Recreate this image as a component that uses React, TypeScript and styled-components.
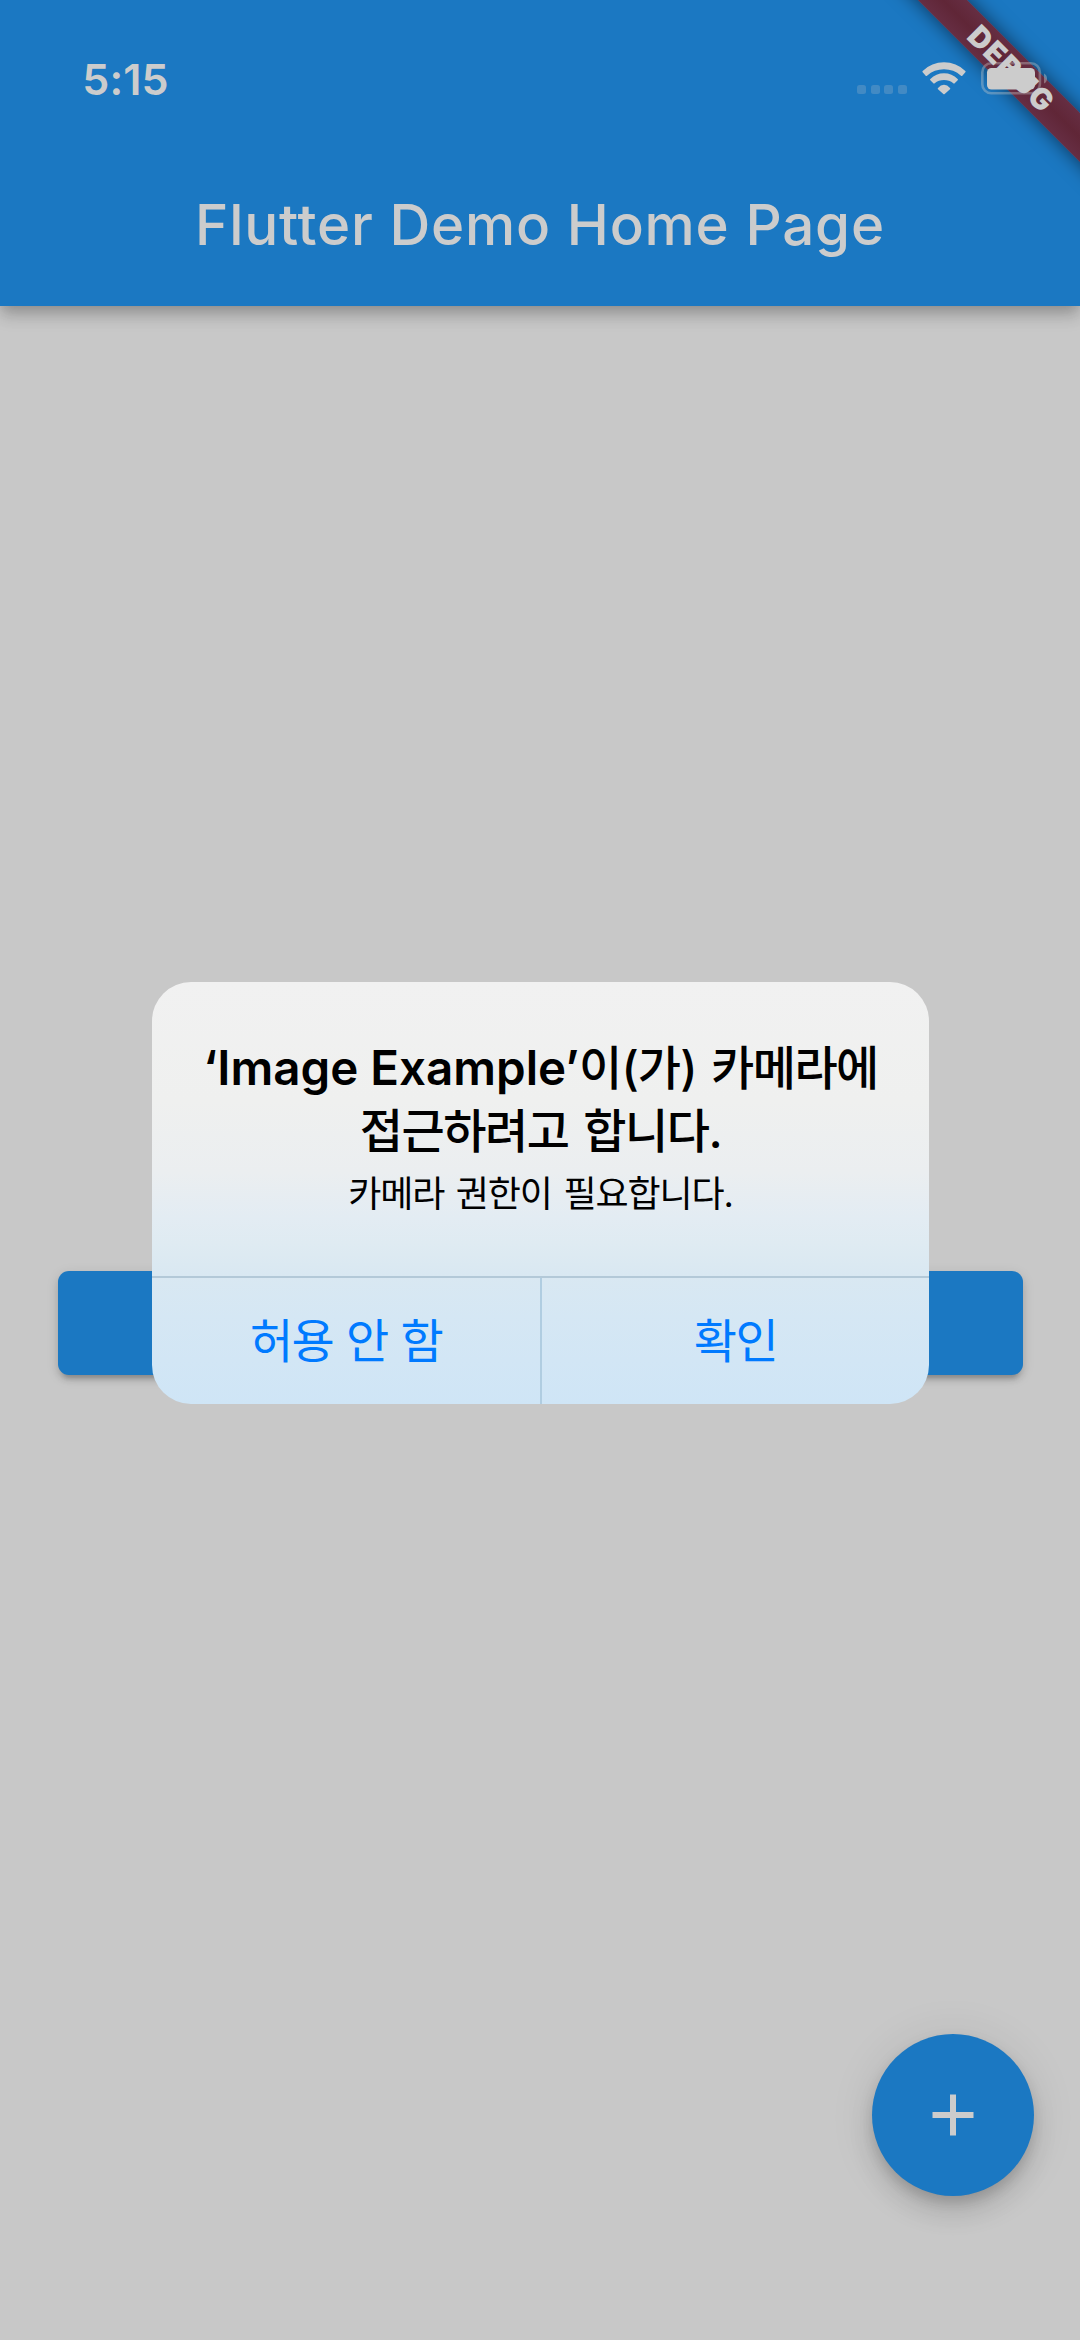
import React from "react";
import styled, { createGlobalStyle } from "styled-components";

const BLUE = "#1b78c2";
const DIM = "#cccccc";

const GlobalStyle = createGlobalStyle`
  * { box-sizing: border-box; }
  html, body { margin: 0; padding: 0; background: #c8c8c8; }
  button { border: 0; padding: 0; margin: 0; background: none; font: inherit; color: inherit; }
`;

const Screen = styled.div`
  position: relative;
  display: flex;
  flex-direction: column;
  width: 1080px;
  height: 2340px;
  overflow: hidden;
  background: #c8c8c8;
  font-family: Inter, "Noto Sans CJK KR", sans-serif;
`;

const AppBar = styled.header`
  position: relative;
  height: 305.5px;
  flex: none;
  background: ${BLUE};
  box-shadow: 0 6px 12px -3px rgba(0, 0, 0, 0.16), 0 12px 15px rgba(0, 0, 0, 0.11),
    0 3px 22px rgba(0, 0, 0, 0.1);
`;

const StatusBar = styled.div`
  position: relative;
  display: flex;
  align-items: flex-start;
  justify-content: space-between;
  height: 142px;
  padding: 52px 33px 0 82.3px;
`;

const Time = styled.span`
  font-size: 43px;
  line-height: 54px;
  font-weight: 600;
  letter-spacing: 0.1px;
  color: ${DIM};
`;

const Indicators = styled.div`
  display: flex;
  padding-top: 10px;
`;

const Dots = styled.div`
  display: flex;
  gap: 4.6px;
  padding-top: 23px;
  margin-right: 15.2px;
`;

const Dot = styled.i`
  width: 9px;
  height: 9px;
  border-radius: 2.5px;
  background: rgba(204, 204, 204, 0.22);
`;

const Wifi = styled.svg`
  width: 44px;
  height: 33px;
  margin-right: 15px;
`;

const Battery = styled.svg`
  width: 66px;
  height: 33px;
`;

const Heading = styled.h1`
  margin: 0;
  padding-top: 47px;
  text-align: center;
  font-size: 56.5px;
  line-height: 72px;
  font-weight: 500;
  letter-spacing: 0.8px;
  color: ${DIM};
`;

const RibbonClip = styled.div`
  position: absolute;
  top: 0;
  right: 0;
  width: 260px;
  height: 260px;
  overflow: hidden;
`;

const Ribbon = styled.div`
  position: absolute;
  left: 31px;
  top: 51px;
  width: 320px;
  height: 35px;
  display: flex;
  align-items: center;
  justify-content: center;
  transform: rotate(45deg);
  background: linear-gradient(#662e43, #602637 50%, #662e43);
  box-shadow: 0 0 18px 1px rgba(0, 0, 0, 0.5);
  color: ${DIM};
  font-size: 29.5px;
  line-height: 35px;
  font-weight: 900;
  letter-spacing: 1.2px;
  text-indent: 1.2px;
`;

const Body = styled.main`
  flex: 1;
  padding: 965.5px 57.5px 0;
`;

const RaisedButton = styled.button`
  display: block;
  width: 100%;
  height: 103.5px;
  border-radius: 11px;
  background: ${BLUE};
  box-shadow: 0 8px 4px -5px rgba(0, 0, 0, 0.16), 0 5px 6px rgba(0, 0, 0, 0.12),
    0 3px 13px rgba(0, 0, 0, 0.1);
`;

const Fab = styled.button`
  position: absolute;
  right: 46px;
  bottom: 144px;
  width: 162px;
  height: 162px;
  display: grid;
  place-items: center;
  border-radius: 50%;
  background: ${BLUE};
  box-shadow: 0 8px 14px -3px rgba(0, 0, 0, 0.16), 0 16px 26px rgba(0, 0, 0, 0.11),
    0 3px 48px rgba(0, 0, 0, 0.09);
`;

const Modal = styled.div`
  position: absolute;
  left: 152px;
  top: 982px;
  width: 777px;
  height: 422px;
  display: flex;
  flex-direction: column;
  overflow: hidden;
  border-radius: 39px;
  background: linear-gradient(
    180deg,
    #f1f1f1 0,
    #eff0ef 118px,
    #ebeef0 190px,
    #e3ecf3 235px,
    #dfebf2 262px,
    #d9e8f2 293px,
    #d5e7f4 335px,
    #cfe5f6 422px
  );
  color: #000;
  text-align: center;
`;

const Message = styled.div`
  height: 294px;
  flex: none;
  padding-top: 54px;
`;

const AlertTitle = styled.h2`
  margin: 0;
  font-size: 47px;
  line-height: 63px;
  font-weight: 600;
  white-space: nowrap;
`;

const Run = styled.span<{ $track: number }>`
  letter-spacing: ${(p) => p.$track}px;
  word-spacing: 3.6px;
  font-weight: 500;
`;

const AppName = styled.span`
  font-size: 47.5px;
  letter-spacing: 0;
`;

const AlertText = styled.p`
  margin: 0;
  padding-top: 2px;
  font-size: 36px;
  line-height: 60px;
  font-weight: 400;
  letter-spacing: -1.1px;
  word-spacing: 2.6px;
`;

const Actions = styled.div`
  display: grid;
  grid-template-columns: 390px 1fr;
  flex: 1;
  border-top: 2px solid #b3c9d8;
`;

const Action = styled.button<{ $divided?: boolean }>`
  display: flex;
  align-items: flex-start;
  justify-content: center;
  padding-top: 31px;
  font-size: 47px;
  line-height: 63px;
  letter-spacing: -1.6px;
  word-spacing: 1.2px;
  color: #007aff;
  border-right: ${(p) => (p.$divided ? "2px solid #b0cde1" : "0")};
`;

export default function App() {
  return (
    <Screen>
      <GlobalStyle />
      <AppBar>
        <RibbonClip>
          <Ribbon>DEBUG</Ribbon>
        </RibbonClip>
        <StatusBar>
          <Time>5:15</Time>
          <Indicators>
            <Dots>
              <Dot />
              <Dot />
              <Dot />
              <Dot />
            </Dots>
            <Wifi viewBox="305 186 132 99" fill={DIM}>
              <path d="M307 213Q305 215 307 217L316 227Q318 229 320 227Q342 208 371 208Q400 208 422 227Q424 229 426 227L435 217Q437 215 435 213Q408 187 371 187Q334 187 307 213Z" />
              <path d="M330 237Q328 239 330 241L339 250Q341 252 343 250Q355 240 371 240Q387 240 399 250Q401 252 403 250L412 241Q414 239 412 237Q395 220 371 220Q347 220 330 237Z" />
              <path d="M353 264Q351 266 353 268L369 282Q371 284 373 282L389 268Q391 266 389 264Q381 254 371 254Q361 254 353 264Z" />
            </Wifi>
            <Battery viewBox="0 0 66 33">
              <rect x="1.3" y="1.3" width="57.6" height="30" rx="9" fill="none" stroke={DIM} strokeOpacity="0.37" strokeWidth="2.6" />
              <rect x="6" y="6" width="48" height="21.6" rx="4.5" fill={DIM} />
              <path d="M63 11.5Q66 13 66 16.5T63 21.5Z" fill={DIM} fillOpacity="0.42" />
            </Battery>
          </Indicators>
        </StatusBar>
        <Heading>Flutter Demo Home Page</Heading>
      </AppBar>
      <Body>
        <RaisedButton />
      </Body>
      <Fab aria-label="+">
        <svg width="42" height="42" viewBox="0 0 42 42" fill={DIM}>
          <path d="M18 .5h6V18h17.500v6H24v17.500h-6V24H.5v-6H18z" />
        </svg>
      </Fab>
      <Modal>
        <Message>
          <AlertTitle>
            <AppName>‘Image Example’</AppName>
            <Run $track={-0.9}>이(가)</Run>
            <Run $track={-1.6}> 카메라에</Run>
            <br />
            <Run $track={-1.5}>접근하려고 합니다.</Run>
          </AlertTitle>
          <AlertText>카메라 권한이 필요합니다.</AlertText>
        </Message>
        <Actions>
          <Action $divided>허용 안 함</Action>
          <Action>확인</Action>
        </Actions>
      </Modal>
    </Screen>
  );
}
